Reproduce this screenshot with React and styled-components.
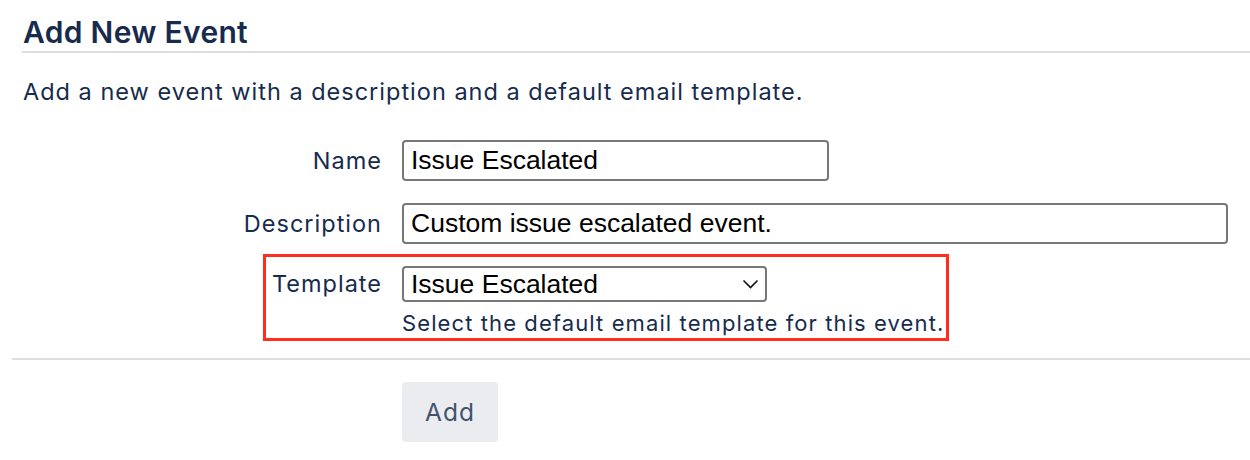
import React from "react";
import styled, { createGlobalStyle } from "styled-components";

const GlobalStyle = createGlobalStyle`
  body {
    margin: 0;
    background: #fff;
    font-family: "Inter", "Noto Sans", sans-serif;
    color: #172b4d;
  }
`;

const Page = styled.div`
  padding-left: 12px;
  width: 1238px;
`;

const Header = styled.h1`
  margin: 0 0 0 10px;
  padding: 15px 0 2px 1px;
  font-size: 30px;
  line-height: 34px;
  font-weight: 600;
  letter-spacing: 0.3px;
  color: #172b4d;
  border-bottom: 2px solid #dfdfdf;
`;

const Intro = styled.p`
  margin: 24px 0 0 11px;
  font-size: 23.5px;
  letter-spacing: 1px;
  line-height: 30px;
  color: #172b4d;
`;

const Form = styled.form`
  display: flex;
  flex-direction: column;
  gap: 22px;
  margin-top: 33px;
`;

const Row = styled.div`
  position: relative;
  display: grid;
  grid-template-columns: 370px 1fr;
  column-gap: 20px;
  align-items: start;
`;

const Label = styled.label`
  text-align: right;
  font-size: 23.5px;
  letter-spacing: 1px;
  line-height: ${p => p.h}px;
  color: #172b4d;
`;

const Field = styled.div`
  display: flex;
  flex-direction: column;
`;

const TextInput = styled.input`
  box-sizing: border-box;
  width: ${p => p.w}px;
  height: 41px;
  padding: 0 7px;
  border: 2px solid #777;
  border-radius: 4px;
  font-family: "Liberation Sans", Arial, sans-serif;
  font-size: 26.5px;
  color: #000;
  background: #fff;
  outline: none;
`;

const SelectWrap = styled.div`
  position: relative;
  width: 365px;
`;

const Select = styled.select`
  box-sizing: border-box;
  width: 100%;
  height: 36px;
  padding: 0 30px 0 7px;
  border: 2px solid #777;
  border-radius: 4px;
  font-family: "Liberation Sans", Arial, sans-serif;
  font-size: 26.5px;
  color: #000;
  background: #fff;
  appearance: none;
  outline: none;
`;

const Chevron = styled.svg`
  position: absolute;
  right: 8px;
  top: 13px;
  pointer-events: none;
`;

const Hint = styled.div`
  margin-top: 8px;
  font-size: 22px;
  letter-spacing: 1.1px;
  line-height: 26px;
  color: #172b4d;
`;

const Highlight = styled.span`
  position: absolute;
  left: 251px;
  top: -12px;
  width: 686px;
  height: 87px;
  box-sizing: border-box;
  border: 3px solid #ff2d20;
  pointer-events: none;
`;

const Divider = styled.hr`
  margin: 22px 0 0;
  border: 0;
  border-top: 2px solid #dfdfdf;
`;

const Actions = styled.div`
  padding: 22px 0 0 390px;
`;

const Button = styled.button`
  width: 96px;
  height: 60px;
  border: 0;
  border-radius: 4px;
  background: #ebecf0;
  color: #42526e;
  font-family: "Inter", "Noto Sans", sans-serif;
  font-size: 24.5px;
  letter-spacing: 1px;
`;

export default function App() {
  return (
    <Page>
      <GlobalStyle />
      <Header>Add New Event</Header>
      <Intro>Add a new event with a description and a default email template.</Intro>
      <Form onSubmit={e => e.preventDefault()}>
        <Row>
          <Label h={41}>Name</Label>
          <Field>
            <TextInput w={427} defaultValue="Issue Escalated" />
          </Field>
        </Row>
        <Row>
          <Label h={41}>Description</Label>
          <Field>
            <TextInput w={826} defaultValue="Custom issue escalated event." />
          </Field>
        </Row>
        <Row>
          <Highlight />
          <Label h={36}>Template</Label>
          <Field>
            <SelectWrap>
              <Select defaultValue="escalated">
                <option value="escalated">Issue Escalated</option>
              </Select>
              <Chevron width="17" height="10" viewBox="0 0 17 10">
                <path d="M1.5 1.5 L8.5 8.5 L15.5 1.5" fill="none" stroke="#111" strokeWidth="1.6" />
              </Chevron>
            </SelectWrap>
            <Hint>Select the default email template for this event.</Hint>
          </Field>
        </Row>
      </Form>
      <Divider />
      <Actions>
        <Button type="button">Add</Button>
      </Actions>
    </Page>
  );
}
